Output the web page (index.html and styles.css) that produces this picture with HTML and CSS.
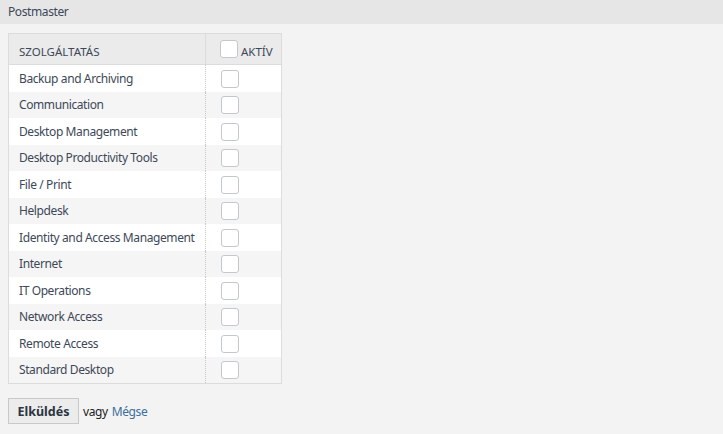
FILE: index.html
```html
<!DOCTYPE html>
<html>
<head>
<meta charset="utf-8">
<link rel="stylesheet" href="styles.css">
</head>
<body>
<div class="topbar">Postmaster</div>
<div class="content">
  <table class="grid">
    <thead>
      <tr>
        <th class="col-name">Szolgáltatás</th>
        <th class="col-check"><span class="cb"></span><span class="lbl">Aktív</span></th>
      </tr>
    </thead>
    <tbody>
      <tr><td>Backup and Archiving</td><td class="c"><span class="cb"></span></td></tr>
      <tr><td>Communication</td><td class="c"><span class="cb"></span></td></tr>
      <tr><td>Desktop Management</td><td class="c"><span class="cb"></span></td></tr>
      <tr><td>Desktop Productivity Tools</td><td class="c"><span class="cb"></span></td></tr>
      <tr><td>File / Print</td><td class="c"><span class="cb"></span></td></tr>
      <tr><td>Helpdesk</td><td class="c"><span class="cb"></span></td></tr>
      <tr><td>Identity and Access Management</td><td class="c"><span class="cb"></span></td></tr>
      <tr><td>Internet</td><td class="c"><span class="cb"></span></td></tr>
      <tr><td>IT Operations</td><td class="c"><span class="cb"></span></td></tr>
      <tr><td>Network Access</td><td class="c"><span class="cb"></span></td></tr>
      <tr><td>Remote Access</td><td class="c"><span class="cb"></span></td></tr>
      <tr><td>Standard Desktop</td><td class="c"><span class="cb"></span></td></tr>
    </tbody>
  </table>
  <div class="actions">
    <button class="btn">Elküldés</button>
    <span class="or">vagy</span>
    <a class="cancel" href="#">Mégse</a>
  </div>
</div>
</body>
</html>
```

FILE: styles.css
```css
html, body {
  margin: 0;
  padding: 0;
  background: #f3f3f3;
  font-family: "Noto Sans", sans-serif;
  font-size: 12px;
  letter-spacing: -0.4px;
  color: #3d4858;
}
.topbar {
  height: 24px;
  line-height: 24px;
  background: #e6e6e6;
  padding-left: 8px;
}
.content {
  padding: 9px 8px;
}
.grid {
  border-collapse: collapse;
  width: 274px;
  border: 1px solid #dcdcdc;
}
.grid th {
  background: #ebebeb;
  height: 25px;
  font-weight: normal;
  font-size: 11.5px;
  letter-spacing: 0;
  text-transform: uppercase;
  text-align: left;
  vertical-align: bottom;
  padding: 0 0 5px 0;
  border-bottom: 1px solid #dcdcdc;
}
.grid th.col-name {
  width: 186px;
  padding-left: 10px;
  border-right: 1px solid #dcdcdc;
}
.grid th.col-check {
  padding-left: 14px;
}
.grid th .cb {
  vertical-align: bottom;
  margin-bottom: 1px;
}
.grid th .lbl {
  margin-left: 3px;
}
.grid td {
  height: 26.5px;
  padding: 0 0 0 10px;
  background: #ffffff;
}
.grid tbody tr:nth-child(even) td {
  background: #f5f5f5;
}
.grid td.c {
  padding-left: 15px;
  border-left: 1px dotted #c8c8c8;
}
.cb {
  display: inline-block;
  width: 16px;
  height: 16px;
  border: 1px solid #c3c8cf;
  border-radius: 3px;
  background: #fff;
  vertical-align: middle;
}
.actions {
  margin-top: 14px;
  display: flex;
  align-items: center;
}
.btn {
  font-family: inherit;
  font-size: 12.5px;
  letter-spacing: 0;
  font-weight: bold;
  color: #2b3440;
  background: #ececec;
  border: 1px solid #c9c9c9;
  height: 26px;
  width: 71px;
  padding: 0;
}
.or {
  margin-left: 4px;
  color: #222;
}
.cancel {
  margin-left: 4px;
  color: #3a6f9c;
  text-decoration: none;
}
```
